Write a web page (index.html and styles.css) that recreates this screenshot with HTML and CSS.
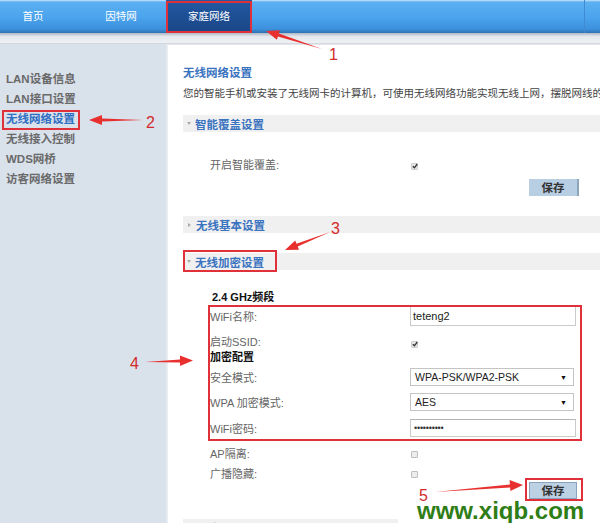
FILE: index.html
```html
<!DOCTYPE html>
<html lang="zh-CN">
<head>
    <meta charset="UTF-8">
    <title>家庭网络 - 无线网络设置</title>
    <link rel="stylesheet" href="styles.css">
</head>
<body>
    <div class="topnav">
        <a href="#" class="tab tab-home">首页</a>
        <a href="#" class="tab tab-net">因特网</a>
        <a href="#" class="tab tab-family">家庭网络</a>
        <span class="nav-edge"></span>
    </div>
    <div class="subbar"></div>

    <div class="main">
        <ul class="sidenav">
            <li>LAN设备信息</li>
            <li>LAN接口设置</li>
            <li class="current">无线网络设置</li>
            <li>无线接入控制</li>
            <li>WDS网桥</li>
            <li>访客网络设置</li>
        </ul>

        <div class="content">
            <h2 class="page-title">无线网络设置</h2>
            <p class="page-desc">您的智能手机或安装了无线网卡的计算机，可使用无线网络功能实现无线上网，摆脱网线的束缚。</p>

            <div class="section-bar bar-smart"><span class="caret-down"></span>智能覆盖设置</div>
            <div class="field-row row-smart">
                <span class="label">开启智能覆盖:</span>
                <span class="check checked check-smart">
                    <svg width="6" height="6" viewBox="0 0 6 6"><path d="M0.8 3.2 L2.4 4.8 L5.3 1" fill="none" stroke="#333" stroke-width="1.3"/></svg>
                </span>
            </div>
            <div class="save-row save-smart"><button class="btn-save">保存</button></div>

            <div class="section-bar bar-basic"><span class="caret-right"></span>无线基本设置</div>
            <div class="section-bar bar-secure"><span class="caret-down"></span>无线加密设置</div>

            <div class="band-title">2.4 GHz频段</div>
            <div class="field-row row-ssid">
                <span class="label">WiFi名称:</span>
                <div class="text-field">teteng2</div>
            </div>
            <div class="field-row row-broadcast">
                <span class="label">启动SSID:</span>
                <span class="check checked check-ssid">
                    <svg width="6" height="6" viewBox="0 0 6 6"><path d="M0.8 3.2 L2.4 4.8 L5.3 1" fill="none" stroke="#333" stroke-width="1.3"/></svg>
                </span>
            </div>
            <div class="field-row row-group">
                <span class="group-title">加密配置</span>
            </div>
            <div class="field-row row-mode">
                <span class="label">安全模式:</span>
                <div class="select-box"><span>WPA-PSK/WPA2-PSK</span><span class="select-arrow">▼</span></div>
            </div>
            <div class="field-row row-cipher">
                <span class="label">WPA 加密模式:</span>
                <div class="select-box"><span>AES</span><span class="select-arrow">▼</span></div>
            </div>
            <div class="field-row row-pass">
                <span class="label">WiFi密码:</span>
                <div class="text-field pass-field">••••••••••</div>
            </div>
            <div class="field-row row-isolate">
                <span class="label">AP隔离:</span>
                <span class="check check-low"></span>
            </div>
            <div class="field-row row-hide">
                <span class="label">广播隐藏:</span>
                <span class="check check-low"></span>
            </div>
            <div class="save-row save-wifi"><button class="btn-save btn-save-boxed">保存</button></div>

            <div class="section-bar bar-more"><span class="caret-right"></span>无线高级设置</div>
        </div>
    </div>

    <div class="watermark">www.xiqb.com</div>

    <!-- annotations drawn on top of the screenshot -->
    <svg class="marks" width="600" height="523" viewBox="0 0 600 523">
        <g fill="none" stroke="#e0303a" stroke-width="2">
            <rect x="167" y="2" width="84" height="30"/>
            <rect x="3" y="111" width="76" height="18"/>
            <rect x="184" y="251" width="92" height="20"/>
            <rect x="209" y="306" width="372" height="134"/>
            <rect x="526" y="479" width="56" height="21"/>
        </g>
        <g fill="#e8302f">
            <polygon points="322,49 278.9,33.6 279.9,30.2 266,31 276.9,39.8 277.9,36.4"/>
            <polygon points="143,120 102,118.5 102,115 89,120 102,125 102,121.5"/>
            <polygon points="330,232 296.5,243.8 295.2,240.6 285,250 299,249.8 297.7,246.6"/>
            <polygon points="145,362 180,359.5 180,355.5 193,360.5 180,366 180,362.5"/>
            <polygon points="435,492 510.1,487.5 510.4,491 523,485 509.6,480 509.9,484.5"/>
        </g>
        <g class="mark-num">
            <text x="329" y="60">1</text>
            <text x="146" y="128">2</text>
            <text x="331" y="234">3</text>
            <text x="130" y="369">4</text>
            <text x="419" y="501">5</text>
        </g>
    </svg>
</body>
</html>
```
FILE: styles.css
```css
body {
    margin: 0;
    width: 600px;
    height: 523px;
    overflow: hidden;
    position: relative;
    font-family: "Liberation Sans", "Noto Sans CJK SC", sans-serif;
    font-size: 11px;
    color: #555;
    background-color: #fff;
}

/* top navigation */
.topnav {
    display: flex;
    height: 33px;
    background: linear-gradient(#cfe4f7 0, #5cb0f2 2px, #4aa3ec 55%, #3d90dc 88%, #2f72b4 100%);
}

.tab {
    color: #fff;
    font-size: 10.5px;
    line-height: 33px;
    text-align: center;
    text-decoration: none;
}

.tab-home {
    width: 66px;
}

.tab-net {
    width: 90px;
    margin-left: 10px;
}

.tab-family {
    width: 86px;
    background: linear-gradient(#2258a3, #1a4686);
}

.nav-edge {
    margin-left: auto;
    width: 15px;
    border-left: 1px solid #3f8ad0;
}

.subbar {
    height: 10px;
    background: linear-gradient(#aeb8c4, #e4e8ed 35%, #eff1f4);
    border-bottom: 1px solid #d3d8df;
}

.main {
    display: flex;
    height: 479px;
}

/* left menu */
.sidenav {
    width: 166px;
    margin: 0;
    padding: 25px 0 0;
    list-style: none;
    background-color: #d9e1eb;
}

.sidenav li {
    padding-left: 6px;
    line-height: 20px;
    font-size: 11.5px;
    font-weight: bold;
    color: #6a6a6a;
}

.sidenav li.current {
    color: #2f6fc4;
}

/* content */
.content {
    flex: 1;
    min-width: 0;
    overflow: hidden;
    border-left: 2px solid #e8ebef;
    border-top: 1px solid #e3e7ec;
    padding: 19px 0 0 15px;
}

.page-title {
    margin: 0;
    font-size: 11.5px;
    line-height: 18px;
    font-weight: bold;
    color: #3a73c0;
}

.page-desc {
    margin: 2px 0 0;
    font-size: 10.5px;
    line-height: 18px;
    color: #444;
    white-space: nowrap;
}

.section-bar {
    display: flex;
    align-items: center;
    gap: 4px;
    height: 17px;
    padding-left: 4px;
    background-color: #f0f0f0;
    font-size: 11.5px;
    font-weight: bold;
    color: #3a73c0;
}

.caret-down {
    width: 0;
    height: 0;
    border-left: 2.5px solid transparent;
    border-right: 2.5px solid transparent;
    border-top: 3px solid #aaa;
}

.caret-right {
    width: 0;
    height: 0;
    margin: 0 1px;
    border-top: 2.5px solid transparent;
    border-bottom: 2.5px solid transparent;
    border-left: 3px solid #aaa;
}

.bar-smart {
    margin-top: 13px;
}

.bar-basic,
.bar-secure,
.bar-more {
    margin-top: 20px;
}

/* form rows */
.field-row {
    display: flex;
    align-items: center;
    padding-left: 27px;
}

.label {
    width: 200px;
    flex-shrink: 0;
    color: #666;
}

.row-smart {
    margin-top: 23px;
    height: 18px;
}

.band-title {
    margin-top: 18px;
    padding-left: 29px;
    line-height: 18px;
    font-weight: bold;
    color: #111;
}

.row-ssid {
    height: 20px;
}

.row-broadcast {
    margin-top: 7px;
    height: 15px;
}

.row-group {
    height: 16px;
}

.group-title {
    font-weight: bold;
    color: #111;
}

.row-mode {
    margin-top: 4px;
    height: 18px;
}

.row-cipher {
    margin-top: 7px;
    height: 18px;
}

.row-pass {
    margin-top: 8px;
    height: 18px;
}

.row-isolate {
    margin-top: 8px;
    height: 16px;
}

.row-hide {
    margin-top: 4px;
    height: 16px;
}

.text-field {
    box-sizing: border-box;
    width: 166px;
    height: 100%;
    display: flex;
    align-items: center;
    padding-left: 2px;
    border: 1px solid #cacaca;
    border-top-color: #b3b3b3;
    background-color: #fff;
    color: #222;
}

.pass-field {
    padding-left: 3px;
    font-size: 9px;
    letter-spacing: -0.2px;
    color: #333;
}

.select-box {
    box-sizing: border-box;
    width: 164px;
    height: 18px;
    display: flex;
    align-items: center;
    justify-content: space-between;
    padding: 0 6px 0 4px;
    border: 1px solid #c4c4c4;
    background-color: #fff;
    font-size: 10.5px;
    color: #222;
}

.select-arrow {
    font-size: 7px;
    color: #111;
}

.check {
    box-sizing: border-box;
    width: 7px;
    height: 7px;
    border: 1px solid #bdbdbd;
    border-radius: 1px;
    background-color: #ededed;
    margin-left: 1px;
}

.check svg {
    display: block;
    margin: -0.5px 0 0 -0.5px;
}

.check.checked {
    border-color: #cfcfcf;
    background-color: #e6e6e6;
}

.check-smart {
    margin-top: 4px;
}

.check-ssid {
    margin-top: 7px;
}

.check-low {
    margin-top: 3px;
}

.save-row {
    padding-left: 346px;
}

.save-smart {
    margin-top: 6px;
}

.save-wifi {
    margin-top: 1px;
}

.btn-save {
    display: block;
    box-sizing: border-box;
    width: 50px;
    height: 17px;
    padding: 0;
    border: 0;
    border-right: 2px solid #8ea6bc;
    background-color: #b8cee2;
    font-family: "Noto Sans CJK SC", sans-serif;
    font-size: 11.5px;
    font-weight: bold;
    line-height: 17px;
    color: #333;
}

.btn-save-boxed {
    width: 48px;
    border: 1px solid #8aa3ba;
    background-color: #bcd1e4;
    line-height: 15px;
}

/* annotations */
.marks {
    position: absolute;
    top: 0;
    left: 0;
    pointer-events: none;
}

.mark-num text {
    font-family: "Liberation Sans", sans-serif;
    font-size: 16px;
    fill: #d32b2b;
}

.watermark {
    position: absolute;
    left: 398px;
    top: 503px;
    width: 183px;
    height: 20px;
    padding-left: 19px;
    background-color: #fff;
    font-family: "Liberation Sans", sans-serif;
    font-size: 24px;
    font-weight: bold;
    line-height: 15px;
    color: #2e7d16;
}
```
